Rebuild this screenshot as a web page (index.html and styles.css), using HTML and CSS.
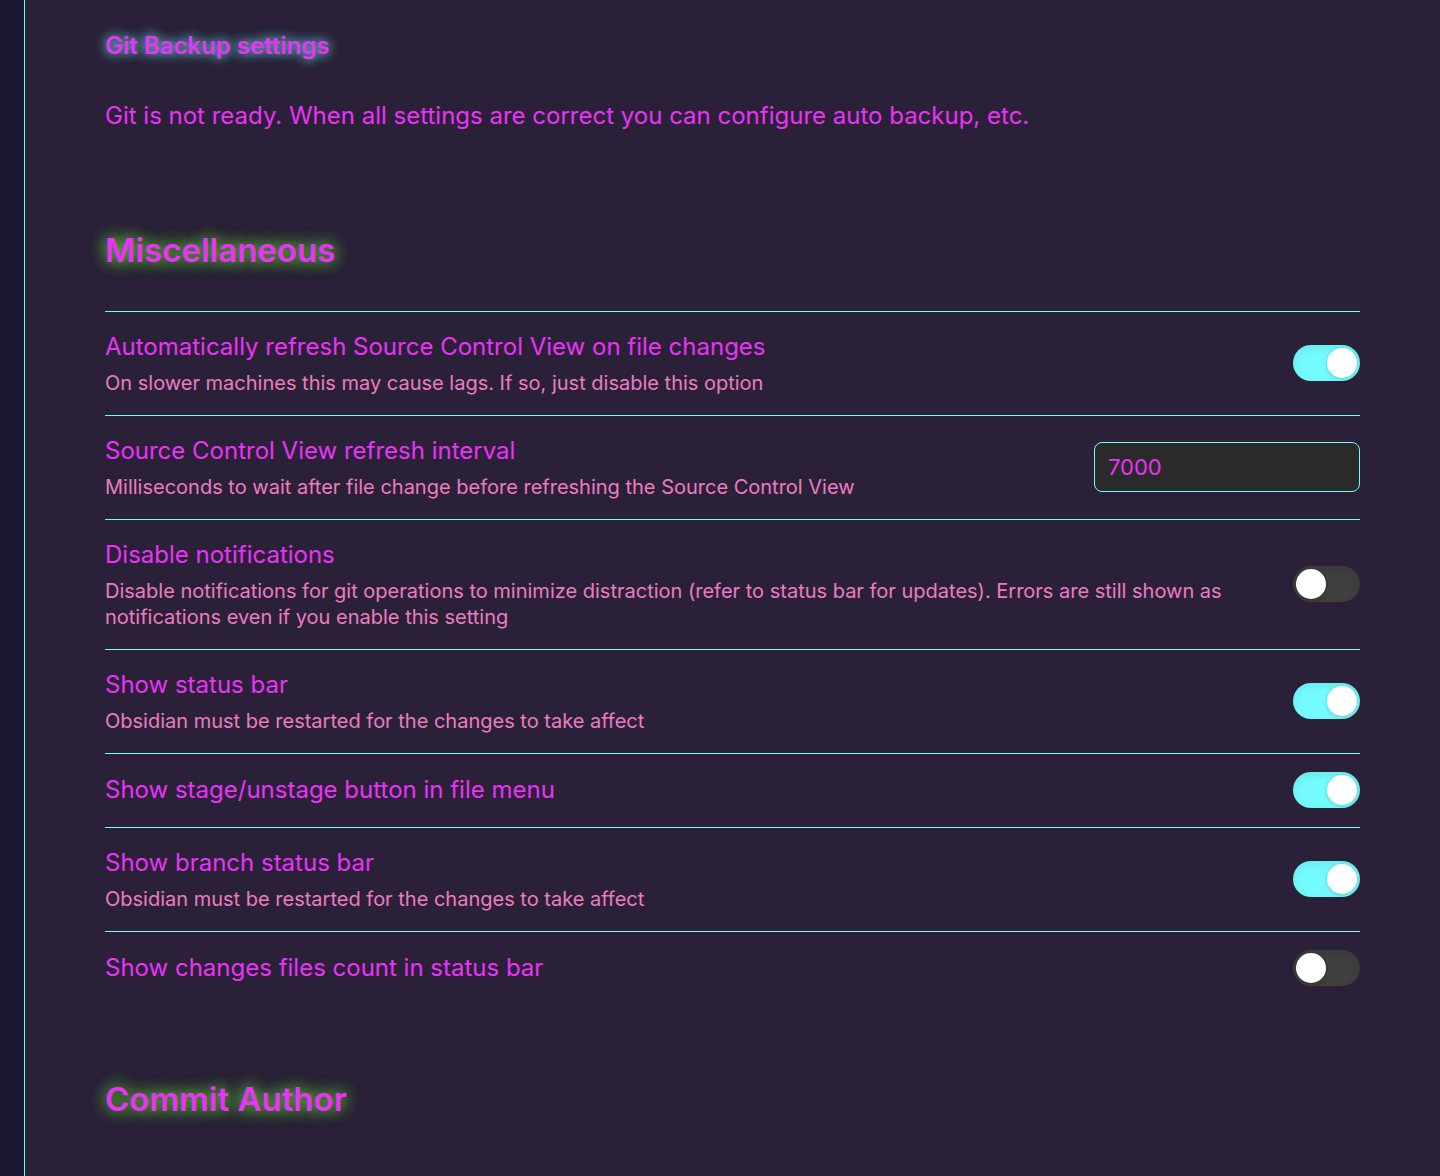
FILE: index.html
```html
<!DOCTYPE html>
<html lang="en">
<head>
<meta charset="utf-8">
<meta name="viewport" content="width=device-width, initial-scale=1">
<title>Git Backup settings</title>
<link rel="stylesheet" href="styles.css">
</head>
<body class="app">
<main class="settings">
  <h2 class="page-title">Git Backup settings</h2>
  <p class="notice">Git is not ready. When all settings are correct you can configure auto backup, etc.</p>

  <section class="group">
    <h1 class="group-title">Miscellaneous</h1>
    <div class="setting">
      <div class="info">
        <label class="name" for="auto-refresh">Automatically refresh Source Control View on file changes</label>
        <p class="desc">On slower machines this may cause lags. If so, just disable this option</p>
      </div>
      <input class="toggle" type="checkbox" id="auto-refresh" checked>
    </div>
    <div class="setting">
      <div class="info">
        <label class="name" for="refresh-interval">Source Control View refresh interval</label>
        <p class="desc">Milliseconds to wait after file change before refreshing the Source Control View</p>
      </div>
      <input class="field" type="text" id="refresh-interval" value="7000">
    </div>
    <div class="setting">
      <div class="info">
        <label class="name" for="disable-notices">Disable notifications</label>
        <p class="desc">Disable notifications for git operations to minimize distraction (refer to status bar for updates). Errors are still shown as notifications even if you enable this setting</p>
      </div>
      <input class="toggle" type="checkbox" id="disable-notices">
    </div>
    <div class="setting">
      <div class="info">
        <label class="name" for="status-bar">Show status bar</label>
        <p class="desc">Obsidian must be restarted for the changes to take affect</p>
      </div>
      <input class="toggle" type="checkbox" id="status-bar" checked>
    </div>
    <div class="setting">
      <div class="info">
        <label class="name" for="file-menu">Show stage/unstage button in file menu</label>
      </div>
      <input class="toggle" type="checkbox" id="file-menu" checked>
    </div>
    <div class="setting">
      <div class="info">
        <label class="name" for="branch-bar">Show branch status bar</label>
        <p class="desc">Obsidian must be restarted for the changes to take affect</p>
      </div>
      <input class="toggle" type="checkbox" id="branch-bar" checked>
    </div>
    <div class="setting">
      <div class="info">
        <label class="name" for="files-count">Show changes files count in status bar</label>
      </div>
      <input class="toggle" type="checkbox" id="files-count">
    </div>
  </section>

  <section class="group">
    <h1 class="group-title">Commit Author</h1>
  </section>
</main>
</body>
</html>
```
FILE: styles.css
```css
* {
  box-sizing: border-box;
}

.app {
  margin: 0;
  min-height: 100vh;
  display: flex;
  padding-left: 24px;
  background: #1a1832;
  color: #ea33f7;
  font-family: Inter, "Liberation Sans", sans-serif;
  font-size: 24px;
  line-height: 34px;
}

.settings {
  flex: 1;
  min-width: 0;
  padding: 29px 80px 0;
  border-left: 1px solid #73fbfd;
  background: #2a2138;
}

.page-title {
  margin: 0;
  font-size: 24px;
  font-weight: 600;
  text-shadow: 0 0 12px rgba(115, 251, 253, 0.6), 0 0 12px rgba(115, 251, 253, 0.6);
}

.notice {
  margin: 36px 0 0;
}

.group {
  padding-top: 94px;
}

.group + .group {
  padding-top: 71px;
}

.group-title {
  margin: 0 0 38px;
  font-size: 33px;
  line-height: 46px;
  font-weight: 600;
  text-shadow: 0 0 16px rgba(100, 230, 50, 0.7), 0 0 16px rgba(100, 230, 50, 0.7);
}

.setting {
  display: flex;
  align-items: center;
  gap: 26px;
  padding: 18px 0 19px;
  border-top: 1px solid #73fbfd;
}

.info {
  flex: 1;
  min-width: 0;
}

.name {
  display: block;
}

.desc {
  margin: 6px 0 0;
  color: #ec7cc0;
  font-size: 20px;
  line-height: 26px;
}

.field {
  width: 266px;
  height: 50px;
  padding: 0 13px;
  border: 1px solid #73fbfd;
  border-radius: 8px;
  background: #2a2a2a;
  color: inherit;
  font: inherit;
  font-size: 22px;
}

.toggle {
  appearance: none;
  flex: none;
  display: flex;
  width: 67px;
  height: 36px;
  margin: 0;
  padding: 3px;
  border-radius: 18px;
  background: #3f3f3f;
  box-shadow: inset 0 3px 8px rgba(0, 0, 0, 0.08);
}

.toggle::before {
  content: "";
  width: 30px;
  height: 30px;
  border-radius: 50%;
  background: #fff;
  box-shadow: 0 1px 4px rgba(0, 0, 0, 0.18);
}

.toggle:checked {
  justify-content: flex-end;
  background: #73fbfd;
}
```
